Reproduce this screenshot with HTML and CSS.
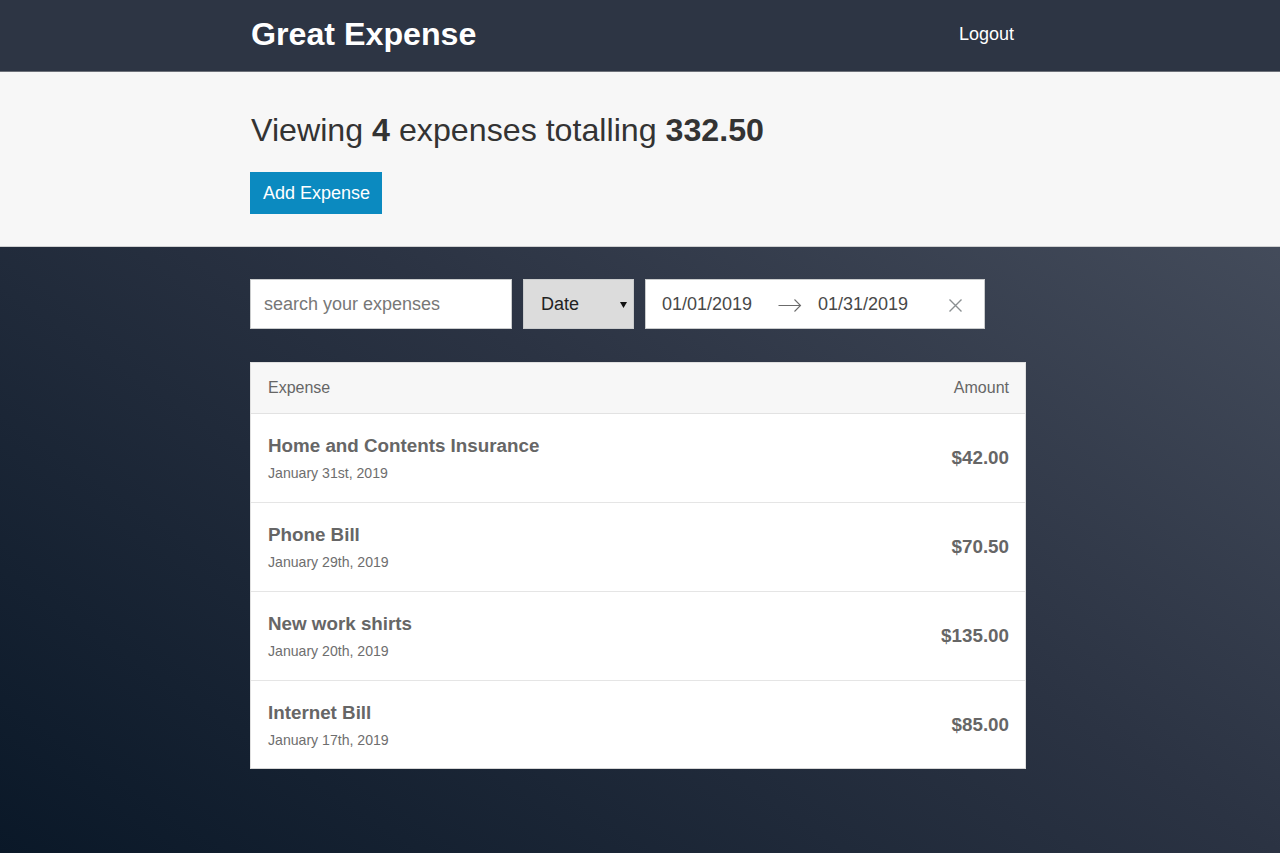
FILE: index.html
```html
<!DOCTYPE html>
<html lang="en">
<head>
<meta charset="utf-8">
<title>Great Expense</title>
<link rel="stylesheet" href="styles.css">
</head>
<body>
<header class="header">
  <div class="container header__content">
    <h1 class="header__title">Great Expense</h1>
    <button class="button-link">Logout</button>
  </div>
</header>

<section class="page-header">
  <div class="container">
    <h2 class="page-header__title">Viewing <b>4</b> expenses totalling <b>332.50</b></h2>
    <button class="button">Add Expense</button>
  </div>
</section>

<main class="container">
  <div class="filters">
    <input class="text-input" type="text" placeholder="search your expenses">
    <div class="select">
      <span>Date</span>
      <svg class="select__arrow" width="7" height="6" viewBox="0 0 7 6"><path d="M0 0h7L3.5 6z" fill="#111"/></svg>
    </div>
    <div class="date-range">
      <span class="date-range__input">01/01/2019</span>
      <svg class="date-range__arrow" width="24" height="24" viewBox="0 0 24 24"><path d="M0.5 12.5h22M16.5 6.5l6 6-6 6" fill="none" stroke="#6b6b6b" stroke-width="1.1"/></svg>
      <span class="date-range__input">01/31/2019</span>
      <span class="date-range__clear">
        <svg width="13" height="13" viewBox="0 0 13 13"><path d="M0.5 0.5l12 12M12.5 0.5l-12 12" stroke="#8a8f91" stroke-width="1.4" fill="none"/></svg>
      </span>
    </div>
  </div>

  <div class="list">
    <div class="list-header">
      <span>Expense</span>
      <span>Amount</span>
    </div>
    <div class="list-item">
      <div>
        <h3 class="list-item__title">Home and Contents Insurance</h3>
        <span class="list-item__sub">January 31st, 2019</span>
      </div>
      <h3 class="list-item__amount">$42.00</h3>
    </div>
    <div class="list-item">
      <div>
        <h3 class="list-item__title">Phone Bill</h3>
        <span class="list-item__sub">January 29th, 2019</span>
      </div>
      <h3 class="list-item__amount">$70.50</h3>
    </div>
    <div class="list-item">
      <div>
        <h3 class="list-item__title">New work shirts</h3>
        <span class="list-item__sub">January 20th, 2019</span>
      </div>
      <h3 class="list-item__amount">$135.00</h3>
    </div>
    <div class="list-item">
      <div>
        <h3 class="list-item__title">Internet Bill</h3>
        <span class="list-item__sub">January 17th, 2019</span>
      </div>
      <h3 class="list-item__amount">$85.00</h3>
    </div>
  </div>
</main>
</body>
</html>
```

FILE: styles.css
```css
* { box-sizing: border-box; }

html, body {
  margin: 0;
  padding: 0;
  min-height: 100%;
}

body {
  font-family: "Liberation Sans", Arial, Helvetica, sans-serif;
  color: #333;
  height: 853px;
  background: linear-gradient(to top right, #0a1828 0%, #2b3343 50%, #4d5564 100%);
}

.container {
  width: 776px;
  margin-left: calc(50% - 390px);
}

.header {
  background: #2d3544;
  border-bottom: 1px solid #6d7179;
}

.header__content {
  display: flex;
  align-items: center;
  justify-content: space-between;
  height: 71px;
}

.header__title {
  margin: 0 0 0 1px;
  color: #fff;
  font-size: 32.2px;
  font-weight: bold;
  line-height: 37px;
  padding-bottom: 3px;
}

.button-link {
  background: none;
  border: none;
  color: #fff;
  font-family: inherit;
  font-size: 18px;
  padding: 0 12px;
  line-height: 22px;
  margin-bottom: 4px;
}

.page-header {
  background: #f7f7f7;
  border-bottom: 1px solid #cfd0d1;
  padding: 40px 0 32px;
}

.page-header__title {
  margin: 0 0 23px 1px;
  font-size: 32.2px;
  font-weight: normal;
  line-height: 37px;
  color: #333;
}

.page-header__title b { font-weight: bold; }

.button {
  background: #0b8ac0;
  color: #fff;
  border: none;
  font-family: inherit;
  font-size: 18px;
  line-height: 22px;
  padding: 10px 12px 10px 13px;
  display: inline-block;
}

.filters {
  display: flex;
  gap: 11px;
  margin-top: 32px;
  height: 50px;
}

.text-input {
  width: 262px;
  height: 50px;
  border: 1px solid #cacccd;
  background: #fff;
  font-family: inherit;
  font-size: 18px;
  padding: 0 13px;
  color: #333;
  outline: none;
}

.text-input::placeholder { color: #777; }

.select {
  width: 111px;
  height: 50px;
  background: #dcdcdc;
  border: 1px solid #cacccd;
  display: flex;
  align-items: center;
  justify-content: space-between;
  padding: 0 6px 0 17px;
  font-size: 18px;
  color: #222;
}

.select__arrow { margin-top: 1px; }

.date-range {
  width: 340px;
  height: 50px;
  background: #fff;
  border: 1px solid #cacccd;
  display: flex;
  align-items: center;
  font-size: 18px;
  color: #484848;
}

.date-range__input {
  width: 124px;
  padding-left: 16px;
}

.date-range__arrow {
  margin: 2px 0 0 8px;
  flex: none;
}

.date-range__clear {
  display: flex;
  padding-left: 23px;
  margin-top: 2px;
}

.list {
  margin-top: 33px;
  border: 1px solid #e0e0e0;
  border-bottom-color: #d6d6d6;
  background: #fff;
}

.list-header {
  background: #f7f7f7;
  border-bottom: 1px solid #e2e2e2;
  color: #666;
  display: flex;
  justify-content: space-between;
  font-size: 16px;
  line-height: 18px;
  padding: 16px 16px 16px 17px;
}

.list-item {
  display: flex;
  align-items: center;
  justify-content: space-between;
  padding: 21px 16px 21px 17px;
  border-bottom: 1px solid #e5e5e5;
  color: #666;
}

.list-item:last-child { border-bottom: none; padding-bottom: 20px; }

.list-item__title {
  margin: 0 0 8px;
  font-size: 18.8px;
  line-height: 22px;
  font-weight: bold;
}

.list-item__sub {
  display: block;
  font-size: 14.1px;
  line-height: 16px;
  color: #6e6e6e;
}

.list-item__amount {
  margin: 0;
  font-size: 18.8px;
  line-height: 22px;
  font-weight: bold;
}
```
